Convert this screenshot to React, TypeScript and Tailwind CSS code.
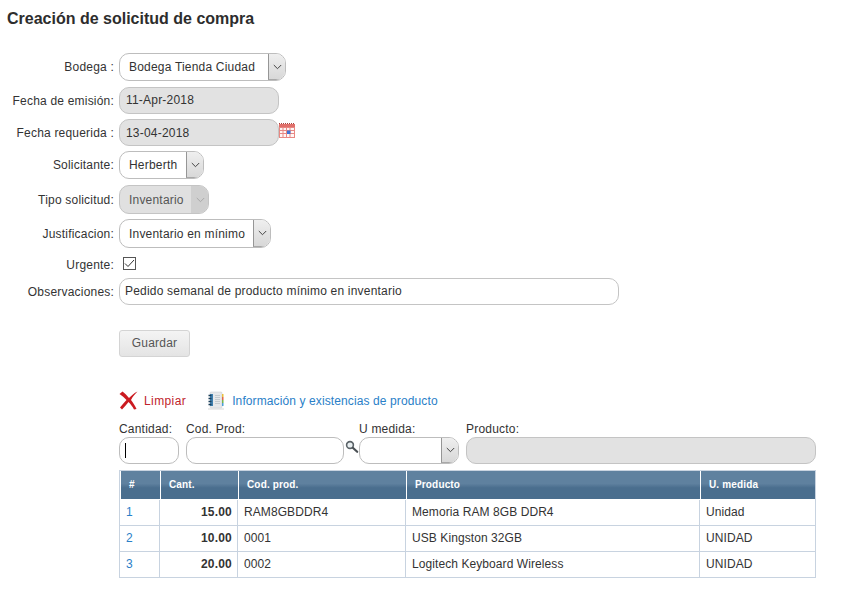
import { ReactNode } from "react";

function RedX() {
  return (
    <svg width="19" height="19" viewBox="0 0 19 19" aria-hidden="true" className="shrink-0">
      <path d="M0.500 3 L3.500 0.500 C6 2.500 8 4.500 10 7 C12.500 4.500 15 2 18.500 0.500 C15.500 3.500 13.500 6 12 9 C14 11.500 16 14.500 17.500 18 L15 18.500 C13.500 15.500 11.500 13 9.500 11 C7.500 13.500 5.500 16 3 18.500 L1 16.500 C3 14 5.200 11.500 7.500 9 C5.500 6.800 3 4.800 0.500 3 Z" fill="#cb1a20" />
    </svg>
  );
}

function Notebook() {
  return (
    <svg width="18" height="19" viewBox="0 0 18 19" aria-hidden="true" className="shrink-0">
      <rect x="1" y="17" width="16" height="2" fill="#ececec" />
      <rect x="3" y="1" width="12" height="16" rx="1" fill="#e6e8ea" stroke="#c4c9cd" strokeWidth="0.5" />
      <rect x="3" y="3" width="3" height="12" fill="#3f7fae" />
      <path d="M1.500 4.500h3M1.500 7.500h3M1.500 10.500h3M1.500 13.500h3" stroke="#1b3f5a" strokeWidth="1.400" />
      <path d="M8 4.500h5M8 6.500h5M8 8.500h5M8 10.500h5M8 12.500h5" stroke="#bcc3c8" strokeWidth="0.800" />
      <rect x="15" y="3" width="1.500" height="3" fill="#e9c13c" />
      <rect x="15" y="6" width="1.500" height="3" fill="#e0664a" />
      <rect x="15" y="9" width="1.500" height="3" fill="#7ab648" />
      <rect x="15" y="12" width="1.500" height="3" fill="#4a9fd8" />
    </svg>
  );
}

function Magnifier() {
  return (
    <svg width="14" height="14" viewBox="0 0 14 14" aria-hidden="true" className="shrink-0">
      <circle cx="5" cy="5" r="3.400" fill="#e8eef0" stroke="#5a6267" strokeWidth="1.600" />
      <path d="M7.800 7.800 L12.200 11.800" stroke="#4a5054" strokeWidth="2.200" strokeLinecap="round" />
    </svg>
  );
}

function CalendarIcon() {
  return (
    <svg width="16" height="15" viewBox="0 0 16 15" aria-hidden="true" className="shrink-0">
      <rect x="0" y="1" width="16" height="14" fill="#e88883" />
      <path d="M0 .5h16" stroke="#a8443f" strokeWidth="1" strokeDasharray="1 1" />
      <rect x="0" y="1" width="16" height="3" fill="#e0706b" />
      <path d="M1 5h2.500v2H1zM4.500 5H7v2H4.500zM8 5h2.500v2H8zM11.500 5H15v2h-3.500zM1 8h2.500v2H1zM4.500 8H7v2H4.500zM11.500 8H15v2h-3.500zM1 11h2.500v3H1zM4.500 11H7v3H4.500zM8 11h2.500v3H8zM11.500 11H15v3h-3.500z" fill="#fff6f5" />
      <rect x="8" y="7.500" width="3.500" height="3.500" fill="#3f74d6" />
    </svg>
  );
}

function Chevron({ muted }: { muted?: boolean }) {
  return (
    <svg width="9" height="6" viewBox="0 0 9 6" aria-hidden="true">
      <path d="M.8 1 L4.500 4.700 L8.200 1" fill="none" stroke={muted ? "#a8a8a8" : "#444"} strokeWidth="1" />
    </svg>
  );
}

function Select({
  value,
  width,
  height = "h-[28px]",
  disabled,
}: {
  value?: string;
  width: string;
  height?: string;
  disabled?: boolean;
}) {
  return (
    <div
      className={`flex ${width} ${height} items-stretch overflow-hidden rounded-[10px] border ${
        disabled ? "border-[#c4c4c4] bg-[#e0e0e0]" : "border-[#bdbdbd] bg-white"
      }`}
    >
      <span className={`flex flex-1 items-center truncate pl-[9px] ${disabled ? "text-[#555]" : "text-[#333]"}`}>
        {value}
      </span>
      <span
        className={`flex w-[17px] items-center justify-center border-l ${
          disabled
            ? "border-[#cfcfcf] bg-[#cfcfcf]"
            : "border-b border-[#969696] border-b-[#a8a8a8] bg-gradient-to-b from-[#efefef] to-[#d8d8d8]"
        }`}
      >
        <Chevron muted={disabled} />
      </span>
    </div>
  );
}

function Field({
  label,
  className,
  labelClass = "",
  children,
}: {
  label: string;
  className: string;
  labelClass?: string;
  children: ReactNode;
}) {
  return (
    <div className={`flex items-center ${className}`}>
      <label className={`mr-[5px] w-[114px] whitespace-nowrap text-right text-[#333] ${labelClass}`}>{label}</label>
      {children}
    </div>
  );
}

function ReadOnlyInput({ value, text = "leading-[25px]" }: { value: string; text?: string }) {
  return (
    <div className={`h-[27px] w-[160px] rounded-[10px] border border-[#c4c4c4] bg-[#e2e2e2] pl-[6px] text-[#333] ${text}`}>
      {value}
    </div>
  );
}

const rows = [
  { n: 1, qty: "15.00", code: "RAM8GBDDR4", name: "Memoria RAM 8GB DDR4", unit: "Unidad" },
  { n: 2, qty: "10.00", code: "0001", name: "USB Kingston 32GB", unit: "UNIDAD" },
  { n: 3, qty: "20.00", code: "0002", name: "Logitech Keyboard Wireless", unit: "UNIDAD" },
];

const headers = ["#", "Cant.", "Cod. prod.", "Producto", "U. medida"];

export default function App() {
  return (
    <div className="h-[600px] w-[841px] overflow-hidden bg-white font-['Liberation_Sans',Arial,sans-serif] text-[12px] tracking-[0.2px] text-[#333]">
      <h1 className="pl-[7px] pt-[10px] text-[16px] leading-[18px] font-bold tracking-normal text-[#2d2d2d]">
        Creación de solicitud de compra
      </h1>

      <div className="mt-[25px]">
        <Field label="Bodega :" className="h-[28px]">
          <Select value="Bodega Tienda Ciudad" width="w-[167px]" />
        </Field>
        <Field label="Fecha de emisión:" className="mt-[6px] h-[27px]">
          <ReadOnlyInput value="11-Apr-2018" />
        </Field>
        <Field label="Fecha requerida :" className="mt-[5px] h-[27px]">
          <ReadOnlyInput value="13-04-2018" text="leading-[26px]" />
          <span className="mb-[5px]">
            <CalendarIcon />
          </span>
        </Field>
        <Field label="Solicitante:" className="mt-[5px] h-[28px]">
          <Select value="Herberth" width="w-[85px]" />
        </Field>
        <Field label="Tipo solicitud:" className="mt-[6px] h-[29px]">
          <Select value="Inventario" width="w-[90px]" height="h-[29px]" disabled />
        </Field>
        <Field label="Justificacion:" className="mt-[5px] h-[29px]">
          <Select value="Inventario en mínimo" width="w-[152px]" height="h-[29px]" />
        </Field>
        <Field label="Urgente:" className="mt-[8px] h-[14px]" labelClass="pt-[3px]">
          <span className="ml-[4px] flex h-[13px] w-[13px] items-center justify-center border border-[#555] bg-white">
            <svg width="11" height="9" viewBox="0 0 11 9" aria-hidden="true">
              <path d="M1 4.500 L4 7.500 L10 1" fill="none" stroke="#333" strokeWidth="1" />
            </svg>
          </span>
        </Field>
        <Field label="Observaciones:" className="mt-[8px] h-[27px]">
          <div className="h-[27px] w-[500px] rounded-[10px] border border-[#c4c4c4] bg-white pl-[5px] leading-[25px] text-[#333]">
            Pedido semanal de producto mínimo en inventario
          </div>
        </Field>
      </div>

      <div className="ml-[119px] mt-[25px]">
        <button className="h-[27px] w-[71px] rounded-[3px] border border-[#d4d4d4] bg-gradient-to-b from-[#f4f4f4] to-[#e4e4e4] pb-[2px] text-[12px] text-[#555]">
          Guardar
        </button>

        <div className="mt-[34px] flex h-[19px] items-center">
          <RedX />
          <a className="ml-[6px] tracking-[0.4px] text-[#c0232c]">Limpiar</a>
          <span className="ml-[21px]">
            <Notebook />
          </span>
          <a className="ml-[7px] tracking-[0.11px] text-[#2a80c8]">Información y existencias de producto</a>
        </div>

        <div className="mt-[10px] flex w-[697px] items-end">
          <div className="w-[60px]">
            <div className="h-[17px] pt-[1px] leading-[17px] text-[#333]">Cantidad:</div>
            <div className="flex h-[27px] items-center rounded-[10px] border border-[#bdbdbd] pl-[5px]">
              <span className="h-[15px] w-px bg-black" />
            </div>
          </div>
          <div className="ml-[7px] w-[158px]">
            <div className="h-[17px] pt-[1px] leading-[17px] text-[#333]">Cod. Prod:</div>
            <div className="h-[27px] rounded-[10px] border border-[#bdbdbd]" />
          </div>
          <span className="mb-[10px] ml-px">
            <Magnifier />
          </span>
          <div className="w-[100px]">
            <div className="h-[17px] pt-[1px] leading-[17px] text-[#333]">U medida:</div>
            <Select width="w-[100px]" height="h-[27px]" />
          </div>
          <div className="ml-[7px] flex-1">
            <div className="h-[17px] pt-[1px] leading-[17px] text-[#333]">Producto:</div>
            <div className="h-[27px] rounded-[10px] border border-[#c4c4c4] bg-[#e2e2e2]" />
          </div>
        </div>

        <div className="mt-[6px] w-[697px] border-x border-t border-[#c8d3e0]">
          <div className="grid h-[29px] grid-cols-[40px_78px_168px_294px_1fr] pb-px pl-px">
            {headers.map((h) => (
              <div
                key={h}
                className="border-r border-white bg-gradient-to-b from-[#5f819f] from-45% to-[#4a6e8e] to-60% pl-[8px] text-[10px] leading-[28px] font-bold tracking-[0.15px] text-white last:border-r-0"
              >
                {h}
              </div>
            ))}
          </div>
          {rows.map((r) => (
            <div
              key={r.n}
              className="grid h-[26px] grid-cols-[40px_78px_168px_294px_1fr] border-b border-[#c8d3e0] leading-[25px] tracking-[0.08px]"
            >
              <div className="border-r border-[#c8d3e0] pl-[6px] text-[#2a80c8]">{r.n}</div>
              <div className="border-r border-[#c8d3e0] pr-[5px] text-right font-bold tracking-[0.2px] text-[#333]">{r.qty}</div>
              <div className="border-r border-[#c8d3e0] pl-[6px] text-[#333]">{r.code}</div>
              <div className="border-r border-[#c8d3e0] pl-[6px] text-[#333]">{r.name}</div>
              <div className="pl-[6px] text-[#333]">{r.unit}</div>
            </div>
          ))}
        </div>
      </div>
    </div>
  );
}
